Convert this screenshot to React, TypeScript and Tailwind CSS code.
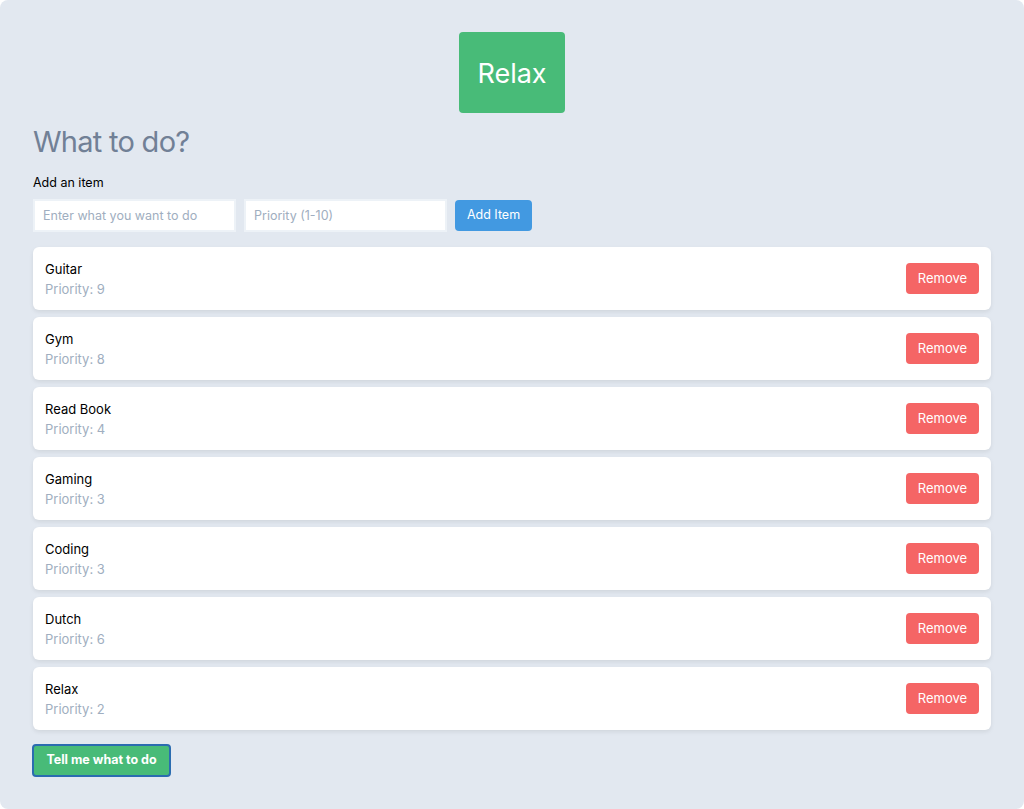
const items = [
  { name: 'Guitar', priority: 9 },
  { name: 'Gym', priority: 8 },
  { name: 'Read Book', priority: 4 },
  { name: 'Gaming', priority: 3 },
  { name: 'Coding', priority: 3 },
  { name: 'Dutch', priority: 6 },
  { name: 'Relax', priority: 2 },
];

function TodoItem({ name, priority }: { name: string; priority: number }) {
  return (
    <li className="flex h-[63px] items-center justify-between rounded-md bg-white pl-3 pr-3 shadow-[0_2px_4px_rgba(0,0,0,0.08)]">
      <div className="text-[13px] leading-5">
        <div className="text-black">{name}</div>
        <div className="text-[#a0aec0]">Priority: {priority}</div>
      </div>
      <button className="h-[31px] w-[73px] rounded bg-[#f56565] text-[13px] text-white">
        Remove
      </button>
    </li>
  );
}

export default function App() {
  return (
    <div className="bg-white font-['Inter',sans-serif]">
      <div className="min-h-[809px] rounded-lg bg-[#e2e8f0] px-[33px] pt-8 pb-8">
        <div className="flex justify-center">
          <div className="flex h-[81px] w-[106px] items-center justify-center rounded-sm bg-[#48bb78] pt-1 text-[27px] text-white">
            Relax
          </div>
        </div>

        <h1 className="mt-[11px] text-[29px] leading-9 tracking-tight text-[#718096]">What to do?</h1>

        <label className="mt-[13px] block text-[12.5px] leading-5 text-black">Add an item</label>
        <div className="mt-1.5 flex items-center gap-2">
          <input
            placeholder="Enter what you want to do"
            className="h-[33px] w-[203px] border-2 border-[#edf2f7] bg-white px-2 text-[12.5px] placeholder:text-[#a0aec0] focus:outline-none"
          />
          <input
            placeholder="Priority (1-10)"
            className="h-[33px] w-[203px] border-2 border-[#edf2f7] bg-white px-2 text-[12.5px] placeholder:text-[#a0aec0] focus:outline-none"
          />
          <button className="h-[31px] w-[77px] rounded-sm bg-[#4299e1] text-[12.5px] text-white">
            Add Item
          </button>
        </div>

        <ul className="mt-[15px] flex flex-col gap-[7px]">
          {items.map((item) => (
            <TodoItem key={item.name} name={item.name} priority={item.priority} />
          ))}
        </ul>

        <button className="mt-[14px] h-[33px] w-[139px] -ml-px rounded border-2 border-[#2b6cb0] bg-[#48bb78] text-[12.5px] font-bold text-white">
          Tell me what to do
        </button>
      </div>
    </div>
  );
}
